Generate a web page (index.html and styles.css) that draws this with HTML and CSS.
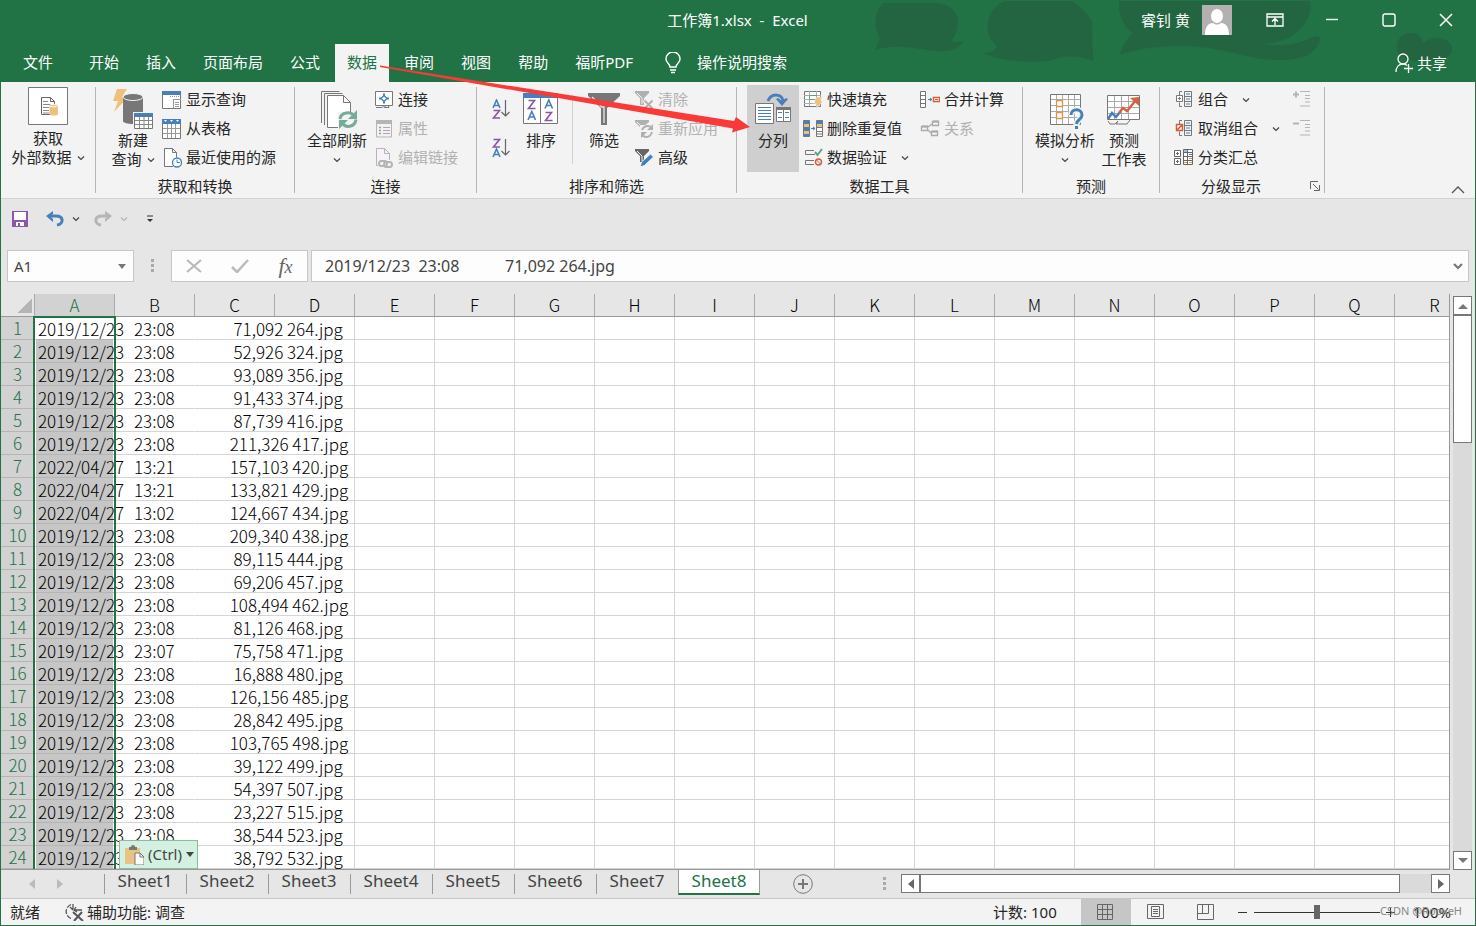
FILE: index.html
```html
<!DOCTYPE html>
<html lang="zh-CN">
<head>
<meta charset="utf-8">
<title>工作簿1.xlsx - Excel</title>
<link rel="stylesheet" href="styles.css">
</head>
<body>
<svg class="symbols" aria-hidden="true">
  <symbol id="chevron" viewBox="0 0 8 6"><path d="M1 1.5 4 4.5 7 1.5" fill="none" stroke="currentColor" stroke-width="1.2"/></symbol>
</svg>
<div class="app">
  <header class="header">
    <svg class="header-art" viewBox="836 0 640 82" width="640" height="82" aria-hidden="true">
      <g fill="#246541">
        <path d="M884 3h50c14 0 24 8 24 18 0 8-2 14-7 20q6 2 12 0c-2 8-14 11-28 10-18-2-38-8-60-1l5-11c-8-14-5-29 4-36z"/>
        <path d="M990 15c4-8 9-11 14-14h68c8 4 14 12 20 20l1 40c-14-6-30-6-44 0-22 2-50 0-68-9 10 2 14-2 16-6-10-8-12-20-7-31z"/>
        <path d="M1119 1h191c2 14-4 26-20 36-8 5-22 8-33 6 20 5 44 1 55-6 6-2 9 0 8 3-4 14-18 21-42 20-30 0-58-14-94-14-24 0-46 2-64 9 2-10 8-16 12-22-10-8-14-20-13-32z"/>
        <path d="M1398 53c-4-10 2-20 13-20 7 0 11 4 12 10 10-8 30-6 29 8-2 8-14 11-26 10-10 2-24-2-28-8z"/>
      </g>
    </svg>
    <div class="titlebar">
      <h1 class="title">工作簿1.xlsx  -  Excel</h1>
      <div class="account">
        <span class="user">睿钊 黄</span>
        <svg class="avatar" viewBox="0 0 30 30" width="30" height="30"><path fill="#b3b0b0" d="M0 0h30v30H0z"/><ellipse cx="15" cy="11" rx="6" ry="7" fill="#fff"/><path d="M3 30c0-8 3-12 8-12 3 2 5 2 8 0 5 0 8 4 8 12z" fill="#fff"/></svg>
        <button class="win" aria-label="功能区显示选项"><svg viewBox="0 0 18 14" width="18" height="14" fill="none" stroke="#fff" stroke-width="1.3"><path d="M1 1h16v12H1zM1 4h16M9 12V6M6 8.500 9 5.500l3 3"/></svg></button>
        <button class="win" aria-label="最小化"><svg viewBox="0 0 14 14" width="14" height="14"><path d="M1 6.500h12" stroke="#fff" stroke-width="1.400"/></svg></button>
        <button class="win" aria-label="最大化"><svg viewBox="0 0 14 14" width="14" height="14"><rect x="1" y="1" width="12" height="12" rx="2" fill="none" stroke="#fff" stroke-width="1.400"/></svg></button>
        <button class="win" aria-label="关闭"><svg viewBox="0 0 14 14" width="14" height="14"><path d="m1 1 12 12M13 1 1 13" stroke="#fff" stroke-width="1.500"/></svg></button>
      </div>
    </div>
    <nav class="tabs">
      <button class="tab tab-file">文件</button>
      <button class="tab">开始</button>
      <button class="tab">插入</button>
      <button class="tab">页面布局</button>
      <button class="tab">公式</button>
      <button class="tab is-active">数据</button>
      <button class="tab">审阅</button>
      <button class="tab">视图</button>
      <button class="tab">帮助</button>
      <button class="tab">福昕PDF</button>
      <button class="tell-me"><svg viewBox="0 0 16 22" width="16" height="22" fill="none" stroke="#fff" stroke-width="1.500"><path d="M5 15c0-3-4-4-4-8a7 7 0 0 1 14 0c0 4-4 5-4 8zM5 18h6M6 20.500h4"/></svg>操作说明搜索</button>
      <button class="share"><svg viewBox="0 0 20 20" width="20" height="20" fill="none" stroke="#fff" stroke-width="1.300"><circle cx="9" cy="6" r="5"/><path d="M2 19c0-5 3-8 7-8 2 0 3 .5 4 1.500M10 15.500h9M14.500 11v9"/></svg>共享</button>
    </nav>
  </header>

  <section class="ribbon" aria-label="数据">
    <div class="group group-external">
      <div class="group-body">
        <button class="big big-external">
          <svg viewBox="28 87 40 38" width="40" height="38"><path d="M28.500 87.500h39v37h-39z" fill="#fff" stroke="#777"/><path d="M50 114.500h-8.500v-17h9l4 4v4M50.500 97.500v4h4" fill="none" stroke="#666"/><path d="M43 101.500h5m-5 3h8m-8 3h6m-6 3h6m-6 2.500h6" stroke="#888"/><path d="M49.500 105v9c0 2 8.500 2 8.500 0v-9z" fill="#eac282"/><ellipse cx="53.700" cy="105.500" rx="4" ry="1.300" fill="#eac282" stroke="#fff"/></svg>
          <span>获取</span><span class="line">外部数据<svg class="chev"><use href="#chevron"/></svg></span>
        </button>
      </div>
    </div>
    <span class="separator"></span>

    <div class="group group-get">
      <div class="group-body">
        <button class="big big-query">
          <svg viewBox="110 85 44 46" width="44" height="46"><path d="M116 89h10l-5 8h6l-14 15 4-11h-5z" fill="#eec07c"/><path d="M122 97v24c0 4 20 4 20 0V97z" fill="#777"/><ellipse cx="132" cy="97" rx="10" ry="3.500" fill="#777" stroke="#f3f3f3"/><path d="M132 112h21v18h-21z" fill="#f3f3f3"/><path d="M133.500 113.500h18v15h-18z" fill="#fff" stroke="#777"/><path d="M133 113h19v4h-19z" fill="#4680bb"/><path d="M134 120.500h17m-17 4h17M138.500 117v11m4.500-11v11m4.500-11v11" stroke="#888"/></svg>
          <span>新建</span><span class="line">查询<svg class="chev"><use href="#chevron"/></svg></span>
        </button>
        <div class="list">
          <button class="small"><svg class="icon" viewBox="0 0 20 20"><path d="M.5 1.500h18v17H.5z" fill="#fff" stroke="#777"/><path d="M0 1h19v4H0z" fill="#4680bb"/><path d="M8 6.500h10" stroke="#999" stroke-dasharray="1 1"/><path d="M11.500 9v9M12 9.500h7M13 12.500h4m-4 2h4m-4 2h4" stroke="#999"/></svg>显示查询</button>
          <button class="small"><svg class="icon" viewBox="0 0 20 20"><path d="M.5 1.500h18v18H.5z" fill="#fff" stroke="#777"/><path d="M0 0h19v5H0z" fill="#4680bb"/><path d="m2 1 1.500 2L5 1zm6 0 1.500 2L11 1zm6 0 1.500 2L17 1z" fill="#fff"/><path d="M1 9.500h17M1 14.500h17M5.500 5v14m4-14v14m4-14v14" stroke="#999"/></svg>从表格</button>
          <button class="small"><svg class="icon" viewBox="0 0 20 20"><path d="M11 18.500H2.500V.500h8l4 4v5M10.500.500v4h4" fill="#fff" stroke="#777"/><circle cx="15" cy="14.500" r="4.500" fill="#fff" stroke="#4680bb" stroke-width="1.300"/><path d="M15 11.500v3h3" fill="none" stroke="#4680bb"/></svg>最近使用的源</button>
        </div>
      </div>
      <div class="group-label">获取和转换</div>
    </div>
    <span class="separator"></span>

    <div class="group group-connect">
      <div class="group-body">
        <button class="big big-wide">
          <svg viewBox="315 85 44 46" width="44" height="46" fill="#fff" stroke="#777"><path d="M321.500 123V91.500h18M324.500 125V93.500h18" fill="none"/><path d="M327.500 127.500v-32h16l7 7v25z"/><path d="M343.500 95.500v7h7" fill="none"/><path d="M338 112h20v18h-20z" fill="#f3f3f3" stroke="none"/><path d="M340 119c1-7 11-8 14-3m2 3.500c-1 8-11 9-14 3" fill="none" stroke="#74ac97" stroke-width="3"/><path d="M357 110v9h-9zM339 129v-9h9z" fill="#74ac97" stroke="none"/></svg>
          <span>全部刷新</span><span class="line line-icon"><svg class="chev"><use href="#chevron"/></svg></span>
        </button>
        <div class="list">
          <button class="small"><svg class="icon" viewBox="0 0 20 20"><path d="M1.500 1.500h17v14h-17z" fill="#fff" stroke="#777"/><path d="m10 5.500 3 3-3 3-3-3z" fill="none" stroke="#4680bb" stroke-width="1.300"/><path d="M10 3.500v2m0 6v2M5 8.500h2m6 0h2" stroke="#4680bb" stroke-width="2"/><path d="M2 17.500h6l2-2h4l1 2h-5l2-2" fill="none" stroke="#777"/></svg>连接</button>
          <button class="small" disabled><svg class="icon" viewBox="0 0 20 20"><path d="M2.500 2v16h15V2z" fill="#f5f0f5" stroke="#b5b5b5"/><path d="M2 1h16v4H2z" fill="#b5b5b5"/><path d="M9 8.500h7m-7 3h7m-7 3h7" stroke="#aaa"/><path d="M5 8.500h2m-2 3h2m-2 3h2" stroke="#999" stroke-width="1.500"/></svg>属性</button>
          <button class="small" disabled><svg class="icon" viewBox="0 0 20 20" fill="none" stroke="#b5b5b5"><path d="M4 17.500H2.500V.500h8l5 5V12M10.500.500v5h5" fill="#f7f2f7"/><rect x="5" y="13" width="8" height="5" rx="2.500" stroke-width="2"/><rect x="10" y="14" width="8" height="5" rx="2.500" stroke-width="2"/></svg>编辑链接</button>
        </div>
      </div>
      <div class="group-label">连接</div>
    </div>
    <span class="separator"></span>

    <div class="group group-sort">
      <div class="group-body">
        <div class="az">
          <button aria-label="升序"><svg viewBox="0 0 20 20" width="20" height="20" fill="none" stroke-width="1.600"><path d="m2 9 3.500-8L9 9M3 6.500h5" stroke="#4680bb"/><path d="M2.500 11.500h6L2.500 19h6.500" stroke="#8a55a5"/><path d="M14.500 1v16m-4-4 4 4 4-4" stroke="#666" stroke-width="1.200"/></svg></button>
          <button aria-label="降序"><svg viewBox="0 0 20 20" width="20" height="20" fill="none" stroke-width="1.600"><path d="M2.500 1.500h6L2.500 9h6.500" stroke="#8a55a5"/><path d="m2 19 3.500-8L9 19M3 16.500h5" stroke="#4680bb"/><path d="M14.500 1v16m-4-4 4 4 4-4" stroke="#666" stroke-width="1.200"/></svg></button>
        </div>
        <button class="big">
          <svg viewBox="519 85 44 46" width="44" height="46" fill="none" stroke-width="1.600"><path d="M523.500 93.500h34v30h-34z" fill="#fff" stroke="#777" stroke-width="1"/><path d="M523 93h35v5h-35z" fill="#4680bb"/><path d="M540.500 98v25" stroke="#777" stroke-width="1"/><path d="M528.500 100.500h6l-6 8h7M545.500 112.500h6l-6 8h7" stroke="#8a55a5"/><path d="m528 120 3.800-8.500L535.500 120m-6-3h5M545 108.500l3.800-8.500 3.700 8.500m-6-3h5" stroke="#4680bb"/></svg>
          <span>排序</span>
        </button>
        <span class="divider"></span>
        <button class="big">
          <svg viewBox="582 85 44 46" width="44" height="46"><path d="M588 93h32v3l-13 12v17h-6v-17l-13-12z" fill="#777"/><path d="m592 97 10 10h2v16" fill="none" stroke="#e8e8e8" stroke-width="1.300"/></svg>
          <span>筛选</span>
        </button>
        <div class="list">
          <button class="small" disabled><svg class="icon" viewBox="0 0 20 20"><path d="M1 1h14v2L10 8v7H6V8L1 3z" fill="#b0b0b0"/><path d="m3 3 5 5v6" fill="none" stroke="#f3f3f3"/><path d="m10 10 8 8m0-8-8 8" stroke="#f3f3f3" stroke-width="4"/><path d="m10.500 10.500 8 8m0-8-8 8" stroke="#b0b0b0" stroke-width="2"/></svg>清除</button>
          <button class="small" disabled><svg class="icon" viewBox="0 0 20 20"><path d="M1 1h14v2l-5 4v8H6V8L1 3z" fill="#b0b0b0"/><path d="m3 3 5 5v6" fill="none" stroke="#f3f3f3"/><path d="M6 6h14v14H6z" fill="#f3f3f3"/><path d="M8 11c2-5 8-5 10-2m0 4c-2 6-7 6-10 3" fill="none" stroke="#b0b0b0" stroke-width="2"/><path d="M19 5v6h-6zM7 19v-6h6z" fill="#b0b0b0"/></svg>重新应用</button>
          <button class="small"><svg class="icon" viewBox="0 0 20 20"><path d="M1 1h14v2L10 8v6H6V8L1 3z" fill="#666"/><path d="m3 3 5 5v5" fill="none" stroke="#f3f3f3"/><path d="m6 19 1.500-5 9-8 3 3-9 8.500z" fill="#4680bb" stroke="#f3f3f3"/></svg>高级</button>
        </div>
      </div>
      <div class="group-label">排序和筛选</div>
    </div>
    <span class="separator"></span>

    <div class="group group-tools">
      <div class="group-body">
        <button class="big big-split is-hover">
          <svg viewBox="751 85 44 46" width="44" height="46"><path d="M755.500 103.500h18v20h-18z" fill="#fff" stroke="#777"/><path d="M758 107.500h13m-13 3h13m-13 3h13m-13 3h13m-13 3h13" stroke="#4680bb"/><path d="M776.500 107.500h14v14h-14z" fill="#fff" stroke="#777"/><path d="M776 107h15v3h-15z" fill="#777"/><path d="M783.500 109v12" stroke="#777"/><path d="M778 112.500h4m3 0h4m-11 5h4m3 0h4" stroke="#4680bb"/><path d="M768 101c3-8 15-8 15 1" fill="none" stroke="#4680bb" stroke-width="3"/><path d="m776 99 6 7 6-7-2-1-4 3-4-3z" fill="#4680bb"/></svg>
          <span>分列</span>
        </button>
        <div class="list">
          <button class="small"><svg class="icon" viewBox="0 0 20 20"><path d="M1.500 1.500h16v15h-16z" fill="#fff" stroke="#777"/><path d="M1 5.500h17M1 9.500h17M1 13.500h17M6.500 1v15m7-15v15" stroke="#aaa"/><path d="M6.500 5.500h7v4h-7z" fill="#fff" stroke="#5ca386"/><path d="M13 7h6l-2 4h3l-7 8 1-5h-3z" fill="#eec07c" stroke="#f3f3f3" stroke-width=".5"/></svg>快速填充</button>
          <button class="small"><svg class="icon" viewBox="0 0 20 20"><path d="M.5 1.500h6v16h-6zM13.500 1.500h6v16h-6z" fill="#4680bb" stroke="#777"/><path d="M1 5h5v3H1zM1 12h5v3H1zM14 5h5v3h-5z" fill="#eec07c"/><path d="M14 9h5v8h-5z" fill="#fff"/><path d="M14 12.500h5M14 15h5" stroke="#777"/><path d="M8 9.500h4m-2-1.500 2 1.500-2 1.500" stroke="#4680bb" fill="none"/></svg>删除重复值</button>
          <button class="small"><svg class="icon" viewBox="0 0 20 20"><path d="M11 2.500H2.500v4H12M11 12.500H2.500v4H11" fill="none" stroke="#777"/><path d="m12 4 2.500 3L19 1" fill="none" stroke="#5ca386" stroke-width="2"/><circle cx="15.500" cy="14" r="3" fill="none" stroke="#d85b3a" stroke-width="1.400"/><path d="m13.500 12 4 4" stroke="#d85b3a"/></svg>数据验证<svg class="chev"><use href="#chevron"/></svg></button>
        </div>
        <div class="list list-second">
          <button class="small"><svg class="icon" viewBox="0 0 20 20"><path d="M.5 1.500h5v16h-5zM1 5.500h4m-4 4h4m-4 4h4" fill="#fff" stroke="#777"/><path d="M8 9.500h4m-2-1.500 2 1.500-2 1.500" stroke="#4680bb" fill="none"/><path d="M13.500 7.500h6v4h-6z" fill="#fff" stroke="#d85b3a" stroke-width="1.400"/><path d="M15 9.500h3" stroke="#d85b3a"/></svg>合并计算</button>
          <button class="small" disabled><svg class="icon" viewBox="0 0 20 20" fill="none" stroke="#aaa"><path d="M1.500 7.500h6v4h-6zM12.500 2.500h6v4h-6zM11.500 12.500h6v4h-6zM8 8l4-3M8 11l3 3" stroke-width="1.300"/><path d="M2 7.500h6M13 2.500h6M12 12.500h6" stroke-width="2"/></svg>关系</button>
        </div>
      </div>
      <div class="group-label">数据工具</div>
    </div>
    <span class="separator"></span>

    <div class="group group-forecast">
      <div class="group-body">
        <button class="big big-wide">
          <svg viewBox="1043 85 44 46" width="44" height="46"><path d="M1050.500 94.500h30v30h-30z" fill="#fff" stroke="#777"/><path d="M1051 99.500h29m-29 6h29m-29 6h29m-29 6h29M1056.500 95v29m6-29v29m6-29v29m6-29v29" stroke="#aaa"/><path d="M1056.500 100.500h6v6h-6zM1056.500 112.500h6v6h-6z" fill="#fff" stroke="#e39243" stroke-width="1.300"/><path d="M1071 115c0-7 11-7 11 0 0 5-5 4-5.500 9v5" fill="none" stroke="#f3f3f3" stroke-width="6"/><path d="M1071 115c0-7 11-7 11 0 0 5-5 4-5.500 9m0 2v3" fill="none" stroke="#4680bb" stroke-width="3"/></svg>
          <span>模拟分析</span><span class="line line-icon"><svg class="chev"><use href="#chevron"/></svg></span>
        </button>
        <button class="big big-sheet">
          <svg viewBox="1102 85 44 46" width="44" height="46"><path d="M1107.500 95.500h32v24h-32z" fill="#fff" stroke="#777"/><path d="M1108 101.500h31m-31 6h31m-31 6h31M1114.500 96v23m7-23v23m7-23v23" stroke="#aaa"/><path d="m1108 119 4-6 4 4 4-5" fill="none" stroke="#4680bb" stroke-width="2.500"/><path d="m1119 113 4-5 4 3 9-11" fill="none" stroke="#d8613f" stroke-width="2.500"/><path d="m1130 98 9-1v9z" fill="#d8613f"/><path d="m1108 121 2 3h5l3-3m0 0-2 3h11l3-4" fill="none" stroke="#777"/></svg>
          <span>预测</span><span class="line">工作表</span>
        </button>
      </div>
      <div class="group-label">预测</div>
    </div>
    <span class="separator"></span>

    <div class="group group-outline">
      <div class="group-body">
        <div class="list">
          <button class="small"><svg class="icon" viewBox="0 0 20 20" fill="none" stroke="#777"><path d="M10.500 1.500h7v15h-7zM10 6.500h8m-8 5h8M8 1.500H5.500v4M8 16.500H5.500v-4"/><path d="M2.500 5.500h6v6h-6z" fill="#fff"/><path d="M4 8.500h3M5.500 7v3"/><path d="M12 4h4m-4 5h4m-4 5h4" stroke="#4680bb"/></svg>组合<svg class="chev"><use href="#chevron"/></svg></button>
          <button class="small"><svg class="icon" viewBox="0 0 20 20" fill="none" stroke="#777"><path d="M10.500 1.500h7v15h-7zM10 6.500h8m-8 5h8M8 1.500H5.500v4M8 16.500H5.500v-4"/><path d="M2.500 5.500h6v6h-6zM3 11l5-5" fill="#fff" stroke="#d85b3a" stroke-width="1.500"/><path d="M12 4h4m-4 5h4m-4 5h4" stroke="#4680bb"/></svg>取消组合<svg class="chev"><use href="#chevron"/></svg></button>
          <button class="small"><svg class="icon" viewBox="0 0 20 20" fill="#fff" stroke="#666"><path d="M.5 2.500h6v6h-6zM.5 10.500h6v6h-6zM2 5.500h3M3.500 4v3M2 13.500h3M3.500 12v3M9.500 1.500h9v15h-9zM9 4.500h10M9 8.500h10M9 12.500h10M13.500 1v15"/><path d="M10 3h3m2 3.500h3" stroke="#4680bb"/><path d="M15 10.500h3m-8 4h3m2 0h3" stroke="#e39243"/></svg>分类汇总</button>
        </div>
        <div class="list list-detail">
          <button class="small" disabled aria-label="显示明细数据"><svg class="icon" viewBox="0 0 20 20" stroke="#b5b5b5"><path d="M0 4.500h6M3 1.500v6" stroke-width="2"/><path d="M7 1.500h10m-5 4h5m-5 3h5m-5 3.500h5m-10 4h10"/></svg></button>
          <button class="small" disabled aria-label="隐藏明细数据"><svg class="icon" viewBox="0 0 20 20" stroke="#b5b5b5"><path d="M0 4.500h6" stroke-width="2"/><path d="M7 1.500h10m-5 4h5m-5 3h5m-5 3.500h5m-10 4h10"/></svg></button>
        </div>
      </div>
      <div class="group-label label-launch"><span>分级显示</span><button class="launcher" aria-label="分级显示设置"><svg viewBox="0 0 10 10" width="10" height="10" fill="none" stroke="#666"><path d="M.5 8V.5H8M3 3l5.500 5.500M9.500 4v5.500H4"/></svg></button></div>
    </div>
    <span class="separator"></span>
    <button class="collapse" aria-label="折叠功能区"><svg viewBox="0 0 14 8" width="14" height="8"><path d="m1 7 6-6 6 6" fill="none" stroke="#555" stroke-width="1.300"/></svg></button>
  </section>

  <div class="quick">
    <button aria-label="保存"><svg viewBox="0 0 16 16" width="16" height="16"><path d="M0 0h16v16H0z" fill="#8a57ad"/><path d="M2 1h12v8H2zM4 11h8v4H4z" fill="#fff"/><path d="M6 12h2v3H6z" fill="#8a57ad"/></svg></button>
    <button class="undo" aria-label="撤消"><svg viewBox="0 0 18 16" width="18" height="16"><path d="M3 5h7c8 0 8 8 1 9" fill="none" stroke="#4680bb" stroke-width="3"/><path d="M7 0 0 5l7 6V8L4 5l3-2z" fill="#4680bb"/></svg><svg class="chev"><use href="#chevron"/></svg></button>
    <button class="redo" disabled aria-label="恢复"><svg viewBox="0 0 18 16" width="18" height="16"><path d="M15 5H8C0 5 0 13 7 14" fill="none" stroke="#b5b5b5" stroke-width="3"/><path d="m11 0 7 5-7 6V8l3-3-3-2z" fill="#b5b5b5"/></svg><svg class="chev"><use href="#chevron"/></svg></button>
    <button class="customize" aria-label="自定义快速访问工具栏"><svg viewBox="0 0 6 8" width="6" height="8"><path d="M0 1h6" stroke="#333"/><path d="M0 4h6L3 7z" fill="#333"/></svg></button>
  </div>

  <div class="formula-row">
    <div class="name-box"><input aria-label="名称框" value="A1"><button aria-label="名称列表"><svg viewBox="0 0 8 5" width="8" height="5"><path d="M0 0h8L4 5z" fill="#777"/></svg></button></div>
    <svg class="grip" viewBox="0 0 4 14" width="4" height="14"><path d="M0 0h3v3H0zM0 5h3v3H0zM0 10h3v3H0z" fill="#aaa"/></svg>
    <div class="formula-actions">
      <button aria-label="取消"><svg viewBox="0 0 16 14" width="16" height="14"><path d="m1 1 14 12M15 1 1 13" stroke="#b8b8b8" stroke-width="2"/></svg></button>
      <button aria-label="输入"><svg viewBox="0 0 18 14" width="18" height="14"><path d="m1 8 5 5L17 1" fill="none" stroke="#bbb" stroke-width="2.500"/></svg></button>
      <button class="fx" aria-label="插入函数"><i>f</i><i class="fx-x">x</i></button>
    </div>
    <div class="formula-box"><input aria-label="编辑栏" value="2019/12/23  23:08           71,092 264.jpg"><button aria-label="展开编辑栏"><svg viewBox="0 0 10 7" width="10" height="7"><path d="m1 1 4 4 4-4" fill="none" stroke="#777" stroke-width="2.200"/></svg></button></div>
  </div>

  <main class="sheet">
    <div class="grid">
      <table class="cells"><thead></thead><tbody></tbody></table>
      <div class="selection"></div>
      <button class="paste"><svg viewBox="0 0 19 20" width="19" height="20"><path d="M0 3h15v16H0z" fill="#eac282"/><path d="M4 2h2a2 2 0 0 1 4 0h2v3H4z" fill="#777"/><path d="M10 8h5l4 4v8h-9z" fill="#fff" stroke="#777"/><path d="M15 8v4h4" fill="none" stroke="#777"/></svg>(Ctrl)<svg viewBox="0 0 8 5" width="8" height="5"><path d="M0 0h8L4 5z" fill="#444"/></svg></button>
    </div>
    <div class="vscroll">
      <button aria-label="向上"><svg viewBox="0 0 10 6" width="10" height="6"><path d="m0 6 5-5 5 5z" fill="#777"/></svg></button>
      <div class="vthumb"></div>
      <button class="down" aria-label="向下"><svg viewBox="0 0 10 6" width="10" height="6"><path d="m0 0 5 5 5-5z" fill="#777"/></svg></button>
    </div>
  </main>

  <div class="sheet-bar">
    <div class="sheet-nav">
      <button aria-label="上一张"><svg viewBox="0 0 6 10" width="6" height="10"><path d="M6 0v10L0 5z" fill="#bbb"/></svg></button>
      <button aria-label="下一张"><svg viewBox="0 0 6 10" width="6" height="10"><path d="M0 0v10l6-5z" fill="#bbb"/></svg></button>
    </div>
    <div class="sheet-tabs">
      <button>Sheet1</button><button>Sheet2</button><button>Sheet3</button><button>Sheet4</button><button>Sheet5</button><button>Sheet6</button><button>Sheet7</button><button class="is-active">Sheet8</button>
    </div>
    <button class="add-sheet" aria-label="新工作表"><svg viewBox="0 0 20 20" width="20" height="20" fill="none" stroke="#777"><circle cx="10" cy="10" r="9.300"/><path d="M5 10h10M10 5v10" stroke-width="2"/></svg></button>
    <svg class="grip" viewBox="0 0 4 14" width="4" height="14"><path d="M0 0h3v3H0zM0 5h3v3H0zM0 10h3v3H0z" fill="#aaa"/></svg>
    <div class="hscroll">
      <button aria-label="向左"><svg viewBox="0 0 6 10" width="6" height="10"><path d="M6 0v10L0 5z" fill="#666"/></svg></button>
      <div class="hthumb"></div>
      <button aria-label="向右"><svg viewBox="0 0 6 10" width="6" height="10"><path d="M0 0v10l6-5z" fill="#666"/></svg></button>
    </div>
  </div>

  <footer class="status">
    <span>就绪</span>
    <button class="access"><svg viewBox="0 0 20 18" width="20" height="18" fill="none" stroke="#555" stroke-width="1.300"><path d="M7 1.500a7.500 7.500 0 0 0 0 14" stroke-dasharray="5 1.500"/><path d="M9 1v5M6 4l3 3M11 7h7M12 4l-2 3 3 2"/><path d="m9 9 10 9M18 9l-8 9" stroke-width="2"/></svg>辅助功能: 调查</button>
    <span class="count">计数: 100</span>
    <div class="views">
      <button class="is-active" aria-label="普通"><svg viewBox="0 0 17 17" width="17" height="17"><path d="M.5.500h15v15H.5zM1 5.500h15M1 10.500h15M5.500 1v15M10.500 1v15" fill="none" stroke="#666"/></svg></button>
      <button aria-label="页面布局"><svg viewBox="0 0 17 17" width="17" height="17"><path d="M.5.500h16v14H.5zM4.500 2.500h8v10h-8zM6 5.500h5m-5 2h5m-5 2h5" fill="none" stroke="#666"/></svg></button>
      <button aria-label="分页预览"><svg viewBox="0 0 17 17" width="17" height="17"><path d="M.5.500h16v15H.5zM5.500.500v9h6v-9M1 9.500h5" fill="none" stroke="#666"/></svg></button>
    </div>
    <button class="zoom-button" aria-label="缩小"><svg viewBox="0 0 9 9" width="9" height="9"><path d="M0 4.500h9" stroke="#333"/></svg></button>
    <input class="zoom" type="range" min="0" max="100" value="50" aria-label="缩放">
    <button class="zoom-button" aria-label="放大"><svg viewBox="0 0 9 9" width="9" height="9"><path d="M0 4.500h9M4.500 0v9" stroke="#333"/></svg></button>
    <button class="percent">100%</button>
    <span class="credit">CSDN @RooxeH</span>
  </footer>

  <svg class="arrow" viewBox="0 0 760 140" width="760" height="140" aria-hidden="true"><path d="M380 65.500 734 121 736 117 750 127 732 132.500 733 128.500 380 67z" fill="#fa3a37"/></svg>
</div>
<script src="sheet.js"></script>
</body>
</html>
```
FILE: styles.css
```css
* { box-sizing: border-box; }
body {
  margin: 0;
  font: 15px/19px "Noto Sans", "Noto Sans CJK SC", sans-serif;
  color: #262626;
}
button, input { font: inherit; color: inherit; margin: 0; padding: 0; border: 0; background: none; }
button { display: inline-flex; align-items: center; justify-content: center; white-space: nowrap; }
input { min-width: 0; outline: 0; }
svg { display: block; flex: none; }
.symbols { position: absolute; width: 0; height: 0; }
.chev { width: 8px; height: 6px; color: #444; }

.app {
  position: relative;
  display: flex;
  flex-direction: column;
  height: 100vh;
  overflow: hidden;
  border: 1px solid #217346;
  background: #e6e6e6;
}

/* Title bar and ribbon tabs */
.header { position: relative; background: #217346; color: #fff; }
.header-art { position: absolute; right: -1px; top: -1px; }
.titlebar, .tabs { position: relative; display: flex; }
.titlebar { display: grid; grid-template-columns: 1fr auto 1fr; height: 43px; padding: 0 1px 4px 0; align-items: center; }
.title { grid-column: 2; margin: 0; font-size: 15px; font-weight: 400; white-space: pre; }
.account { display: flex; align-items: center; justify-content: flex-end; height: 38px; align-self: start; }
.avatar { margin: 0 14px 0 12px; }
.win { width: 57px; height: 38px; }
.tabs { height: 38px; align-items: stretch; gap: 3px; padding: 0 28px 0 10px; }
.tab { padding: 0 12px 2px; }
.tab-file { margin-right: 9px; }
.tab.is-active { background: #f3f3f3; color: #217346; }
.tell-me { gap: 16px; margin-left: 17px; padding-bottom: 1px; }
.share { gap: 3px; margin-left: auto; }

/* Ribbon */
.ribbon { display: flex; padding: 3px 0 1px; background: #f3f3f3; border-bottom: 1px solid #d2d2d2; }
.group { display: flex; flex-direction: column; flex: none; }
.group-body { display: flex; align-items: flex-start; height: 87px; }
.group-label { padding-top: 3px; line-height: 22px; text-align: center; }
.separator { width: 1px; margin: 2px 0 4px; background: #b5b5b5; }
.big { flex-direction: column; justify-content: flex-start; min-width: 44px; height: 87px; }
.big-wide { width: 64px; }
.big-query, .big-sheet { width: 48px; }
.big-split { width: 52px; }
.big-external { width: 86px; padding-top: 2px; }
.big-external > svg { margin-bottom: 4px; }
.is-hover { background: #cfcfcf; }
.line { display: flex; align-items: center; gap: 5px; height: 19px; }
.list { display: flex; flex-direction: column; }
.small { justify-content: flex-start; gap: 4px; height: 29px; }
.small:disabled { color: #b1b1b1; }
.small .chev { margin-left: 10px; }
.icon { width: 20px; height: 20px; }
.group-external { width: 94px; padding-left: 4px; }
.group-get { width: 198px; }
.group-get .group-body { gap: 5px; padding-left: 13px; }
.group-connect { width: 181px; }
.group-connect .group-body { gap: 5px; padding-left: 10px; }
.group-sort { width: 259px; }
.group-sort .group-body { gap: 8px; padding-left: 14px; }
.az { display: flex; flex-direction: column; padding-top: 4px; }
.az button { height: 39px; }
.divider { width: 1px; height: 70px; margin: 9px 1px 0; background: #d2d2d2; }
.group-tools { width: 285px; }
.group-tools .group-body { gap: 4px; padding-left: 10px; }
.list-second { margin-left: 7px; }
.group-forecast { width: 136px; }
.group-forecast .group-body { gap: 3px; padding-left: 10px; }
.group-outline { width: 164px; }
.group-outline .group-body { gap: 13px; padding-left: 14px; }
.label-launch { display: flex; justify-content: flex-end; align-items: center; gap: 49px; padding-right: 4px; }
.collapse { align-self: flex-end; margin: 0 10px 3px auto; }

/* Quick access toolbar */
.quick { display: flex; align-items: center; height: 42px; padding: 0 0 2px 11px; }
.quick button { gap: 8px; }
.undo { margin-left: 18px; }
.redo { margin-left: 14px; }
.redo .chev { color: #b5b5b5; }
.customize { margin-left: 19px; }

/* Formula bar */
.formula-row { display: flex; align-items: center; padding: 9px 6px 12px; }
.name-box, .formula-actions, .formula-box { display: flex; align-items: center; height: 32px; border: 1px solid #c6c6c6; background: #fdfdfd; }
.name-box { width: 127px; padding: 0 7px 0 6px; }
.name-box input, .formula-box input { flex: 1; color: #444; }
.formula-row .grip { margin: 0 16px 0 17px; }
.formula-actions { width: 137px; margin-right: 3px; justify-content: space-around; }
.fx { align-items: baseline; font: 22px/24px "Liberation Serif", serif; color: #666; }
.fx-x { font-size: 18px; }
.formula-box { flex: 1; padding: 0 5px 0 13px; }
.formula-box input { font-size: 16px; white-space: pre; }

/* Worksheet */
.sheet { display: flex; flex: 1; min-height: 0; gap: 3px; padding-right: 3px; }
.grid { position: relative; flex: 1; min-width: 0; overflow: hidden; border: 0 solid #999; border-width: 0 1px 1px 0; }
.cells { width: 1474px; border-spacing: 0; table-layout: fixed; font: 300 17px/22px "Noto Sans CJK SC", sans-serif; color: #000; }
.cells th, .cells td { height: 23px; padding: 0; border: 0 solid #d4d4d4; border-width: 0 1px 1px 0; }
.cells td { background: #fff; }
.cells th { background: #e6e6e6; font-weight: 300; }
.cells thead th { border-color: #ababab; border-bottom-color: #999; }
.cells thead th.corner { width: 34px; background: #e6e6e6 linear-gradient(135deg, #e6e6e6 50%, #b5b5b5 50%) 16px 4px / 15px 15px no-repeat; }
.cells tbody th { background: #d2d2d2; border-color: #b5b5b5; color: #217346; }
.cells thead th.picked { background: #d2d2d2; color: #217346; }
.cells td.spill { border-right-color: #fff; }
.cells td.entry { position: relative; z-index: 1; border-left: 1px solid #fff; border-right: 2px solid #fff; background: #c6c6c6; background-clip: padding-box; border-bottom-color: #b5b5b5; }
.cells tr:first-child td.entry { background: #fff; }
.record { display: flex; width: 0; padding-left: 2px; height: 22px; line-height: 24px; white-space: pre; }
.record span { flex: none; }
.record-date { width: 96px; }
.record-time { width: 92px; }
.selection { position: absolute; z-index: 2; left: 32px; top: 22px; bottom: -4px; width: 83px; border: 2px solid #217346; }
.paste { position: absolute; z-index: 3; left: 118px; bottom: 0; height: 29px; padding: 0 3px 0 5px; gap: 4px; border: 1px solid #86bfa0; background: #d3f0e0; color: #444; }
.vscroll { display: flex; flex-direction: column; width: 19px; margin-top: 2px; background: #dadada; }
.vscroll button, .hscroll button { flex: none; width: 19px; height: 19px; border: 1px solid #777; background: #fff; }
.vthumb { height: 128px; border: 1px solid #777; background: #fff; }
.vscroll .down { margin-top: auto; }

/* Sheet tabs */
.sheet-bar { display: flex; height: 29px; padding-right: 25px; border-bottom: 1px solid #c6c6c6; }
.sheet-nav { display: flex; width: 103px; gap: 22px; padding-left: 28px; }
.sheet-tabs { display: flex; align-items: flex-start; }
.sheet-tabs button { width: 82px; height: 25px; padding-bottom: 5px; font-size: 17px; color: #444; background: linear-gradient(#999, #999) 0 4px / 1px 20px no-repeat; }
.sheet-tabs .is-active { padding-bottom: 3px; background: #fff; color: #217346; border: 1px solid #999; border-width: 0 1px 2px; border-bottom-color: #217346; }
.add-sheet { margin-left: 33px; }
.sheet-bar > .grip { align-self: center; margin-left: auto; }
.hscroll { display: flex; align-items: center; width: 549px; height: 19px; margin: 4px 0 0 14px; background: #dadada; }
.hthumb { width: 480px; height: 19px; border: 1px solid #777; background: #fff; }
.hscroll button:last-child { margin-left: auto; }

/* Status bar */
.status { display: flex; align-items: center; height: 26px; padding-left: 9px; background: #f3f3f3; position: relative; }
.access { gap: 3px; margin-left: 24px; }
.count { margin-left: auto; }
.views { display: flex; align-self: stretch; margin: 0 7px 0 24px; }
.views button { width: 50px; }
.views .is-active { background: #c6c6c6; }
.zoom { width: 126px; height: 14px; margin: 0 6px 0 7px; appearance: none; background: linear-gradient(#333, #333) center / 100% 1px no-repeat; }
.zoom::-webkit-slider-thumb { appearance: none; width: 6px; height: 14px; background: #666; }
.percent { margin: 0 24px 0 18px; }
.credit { position: absolute; right: 13px; top: 2px; font-size: 11px; color: #888; }

.arrow { position: absolute; z-index: 5; left: -1px; top: -1px; pointer-events: none; }
```
FILE: sheet.js
```js
const columns = "ABCDEFGHIJKLMNOPQR".split("");
const files = [
  "71,092 264", "52,926 324", "93,089 356", "91,433 374", "87,739 416", "211,326 417",
  "157,103 420", "133,821 429", "124,667 434", "209,340 438", "89,115 444", "69,206 457",
  "108,494 462", "81,126 468", "75,758 471", "16,888 480", "126,156 485", "28,842 495",
  "103,765 498", "39,122 499", "54,397 507", "23,227 515", "38,544 523", "38,792 532"
];
const times = { 7: "13:21", 8: "13:21", 9: "13:02", 15: "23:07" };

document.querySelector(".cells thead").innerHTML =
  '<tr><th class="corner"></th>' +
  columns.map((name, i) => `<th${i === 0 ? ' class="picked"' : ""}>${name}</th>`).join("") +
  "</tr>";

document.querySelector(".cells tbody").innerHTML = files.map((file, i) => {
  const row = i + 1;
  const date = row >= 7 && row <= 9 ? "2022/04/27" : "2019/12/23";
  const time = times[row] || "23:08";
  const indent = file.length === 11 ? " " : "  ";
  const entry = '<td class="entry"><div class="record">' +
    `<span class="record-date">${date}</span><span class="record-time">${time}</span>` +
    `<span>${indent}${file}.jpg</span></div></td>`;
  const rest = columns.slice(1).map((name, c) => `<td${c < 2 ? ' class="spill"' : ""}></td>`).join("");
  return `<tr><th>${row}</th>${entry}${rest}</tr>`;
}).join("");
```
